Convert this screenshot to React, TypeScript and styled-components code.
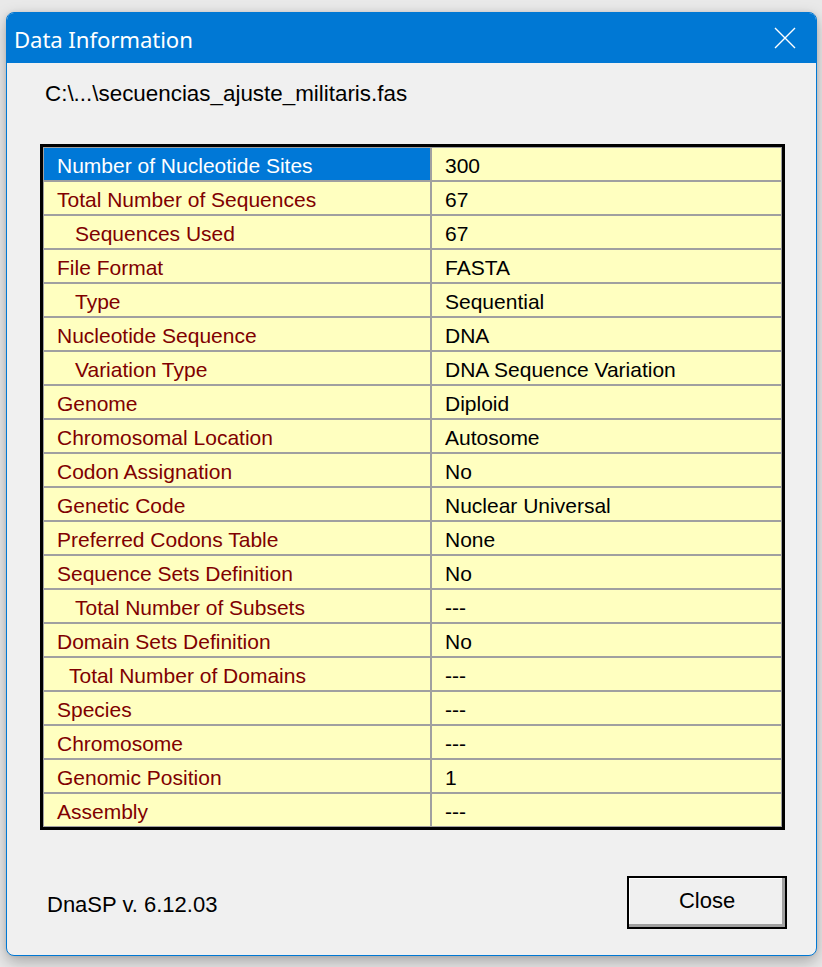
import React from "react";
import styled, { createGlobalStyle } from "styled-components";

const Global = createGlobalStyle`
  html, body { margin: 0; padding: 0; }
  body {
    background: #e9e9e9;
    font-family: "Liberation Sans", Arial, sans-serif;
    width: 822px;
    height: 967px;
    overflow: hidden;
  }
`;

const Page = styled.div`
  padding: 12px 5px 0 6px;
  box-sizing: border-box;
  width: 822px;
  height: 967px;
`;

const Window = styled.div`
  width: 811px;
  height: 944px;
  box-sizing: border-box;
  border: 1px solid #0078d4;
  border-radius: 8px;
  overflow: hidden;
  background: #f0f0f0;
  display: flex;
  flex-direction: column;
  box-shadow: 0 6px 16px rgba(0, 0, 0, 0.28), 0 0 4px rgba(0, 0, 0, 0.08);
`;

const TitleBar = styled.div`
  height: 50px;
  flex: none;
  background: #0078d4;
  display: flex;
  align-items: center;
  justify-content: space-between;
  padding: 0 20px 0 7px;
  color: #fff;
`;

const Title = styled.div`
  font-family: "Noto Sans", "Open Sans", sans-serif;
  font-size: 22.2px;
  letter-spacing: -0.1px;
  padding-top: 2px;
`;

const CloseX = styled.svg`
  width: 22px;
  height: 22px;
  display: block;
`;

const Client = styled.div`
  flex: 1;
  display: flex;
  flex-direction: column;
  padding: 18px 0 0 33px;
`;

const Path = styled.div`
  font-size: 22.4px;
  color: #000;
  line-height: 26px;
  padding-left: 5px;
  height: 26px;
`;

const Table = styled.div`
  margin-top: 37px;
  width: 745px;
  box-sizing: border-box;
  border: 3px solid #000;
  background: #a0a0a0;
  padding: 1px;
  display: grid;
  grid-template-columns: 386px 1fr;
  grid-auto-rows: 32px;
  gap: 2px;
`;

const Cell = styled.div<{ $selected?: boolean; $label?: boolean; $indent?: number }>`
  background: ${(p) => (p.$selected ? "#0078d7" : "#ffffc0")};
  color: ${(p) => (p.$selected ? "#fff" : p.$label ? "#800000" : "#000")};
  font-size: 21px;
  display: flex;
  align-items: center;
  padding-left: ${(p) => p.$indent ?? 13}px;
  padding-top: 3px;
  white-space: nowrap;
`;

const Footer = styled.div`
  margin-top: auto;
  display: flex;
  align-items: center;
  justify-content: space-between;
  padding: 0 29px 26px 7px;
`;

const Version = styled.div`
  font-size: 22px;
  color: #000;
  padding-top: 4px;
`;

const Button = styled.button`
  width: 160px;
  height: 53px;
  box-sizing: border-box;
  background: #f0f0f0;
  border: 2px solid #000;
  box-shadow: inset -3px -3px 0 #a0a0a0, inset 1px 1px 0 #fff;
  font-family: "Liberation Sans", Arial, sans-serif;
  font-size: 22px;
  color: #000;
  padding: 0 0 4px 0;
`;

type Row = { label: string; value: string; indent?: number; selected?: boolean };

const rows: Row[] = [
  { label: "Number of Nucleotide Sites", value: "300", selected: true },
  { label: "Total Number of Sequences", value: "67" },
  { label: "Sequences Used", value: "67", indent: 31 },
  { label: "File Format", value: "FASTA" },
  { label: "Type", value: "Sequential", indent: 31 },
  { label: "Nucleotide Sequence", value: "DNA" },
  { label: "Variation Type", value: "DNA Sequence Variation", indent: 31 },
  { label: "Genome", value: "Diploid" },
  { label: "Chromosomal Location", value: "Autosome" },
  { label: "Codon Assignation", value: "No" },
  { label: "Genetic Code", value: "Nuclear Universal" },
  { label: "Preferred Codons Table", value: "None" },
  { label: "Sequence Sets Definition", value: "No" },
  { label: "Total Number of Subsets", value: "---", indent: 31 },
  { label: "Domain Sets Definition", value: "No" },
  { label: "Total Number of Domains", value: "---", indent: 25 },
  { label: "Species", value: "---" },
  { label: "Chromosome", value: "---" },
  { label: "Genomic Position", value: "1" },
  { label: "Assembly", value: "---" },
];

export default function App() {
  return (
    <Page>
      <Global />
      <Window>
        <TitleBar>
          <Title>Data Information</Title>
          <CloseX viewBox="0 0 22 22">
            <path d="M1 1 L21 21 M21 1 L1 21" stroke="#fff" strokeWidth="1.4" fill="none" />
          </CloseX>
        </TitleBar>
        <Client>
          <Path>C:\...\secuencias_ajuste_militaris.fas</Path>
          <Table>
            {rows.map((r) => (
              <React.Fragment key={r.label}>
                <Cell $label $selected={r.selected} $indent={r.indent}>
                  {r.label}
                </Cell>
                <Cell>{r.value}</Cell>
              </React.Fragment>
            ))}
          </Table>
          <Footer>
            <Version>DnaSP v. 6.12.03</Version>
            <Button>Close</Button>
          </Footer>
        </Client>
      </Window>
    </Page>
  );
}
